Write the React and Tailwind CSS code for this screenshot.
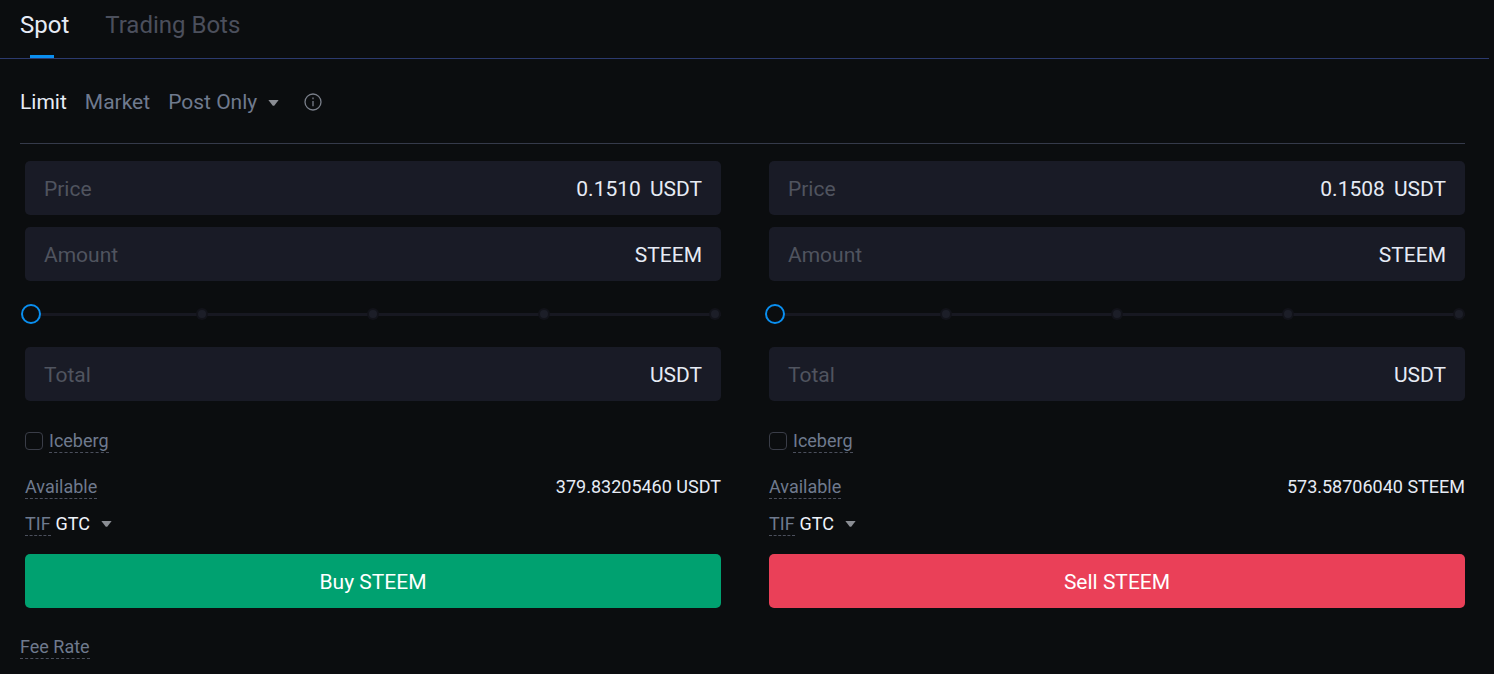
import React from "react";

function Caret({ className }) {
  return (
    <svg viewBox="0 0 12 8" className={className}>
      <path d="M0.4 0.6 H11.6 L7 6.6 Q6 7.6 5 6.6 Z" fill="#8a8d93" />
    </svg>
  );
}

function Field({ label, value, unit }) {
  return (
    <div className="flex h-[54px] items-center justify-between rounded-[5px] bg-[#191b26] px-[19px] pt-[3px] text-[21px]">
      <span className="text-[#50545f]">{label}</span>
      <span className="flex gap-[9px] text-[#e6ebf5]">
        {value && <span>{value}</span>}
        <span>{unit}</span>
      </span>
    </div>
  );
}

function Slider() {
  return (
    <div className="relative my-[22px] flex h-[22px] items-center">
      <div className="h-[3px] w-full bg-[#171821]" />
      <div className="absolute inset-x-0 flex items-center justify-between pl-[173px] pr-[2px]">
        {[0, 1, 2, 3].map((i) => (
          <span key={i} className="h-2 w-2 rounded-full bg-[#1c1e28] ring-2 ring-[#12131a]" />
        ))}
      </div>
      <span className="absolute left-[-4px] h-5 w-5 rounded-full border-2 border-[#0a8ff0] bg-[#0b0d0f]" />
    </div>
  );
}

function Side({ price, avail, action, btn }) {
  return (
    <div className="flex w-[696px] flex-col">
      <div className="flex flex-col gap-3">
        <Field label="Price" value={price} unit="USDT" />
        <Field label="Amount" unit="STEEM" />
      </div>
      <Slider />
      <Field label="Total" unit="USDT" />
      <div className="mt-[29px] flex h-[22px] items-center gap-[6px] text-[18px] leading-[22px]">
        <span className="h-[18px] w-[18px] rounded-[4px] border border-[#3a3d48]" />
        <span className="border-b border-dashed border-[#4b4f5c] text-[#6f7a8e]">Iceberg</span>
      </div>
      <div className="mt-[24px] flex h-[22px] items-center justify-between text-[18px] leading-[22px]">
        <span className="border-b border-dashed border-[#4b4f5c] text-[#6f7a8e]">Available</span>
        <span className="text-[#e6ebf5]">{avail}</span>
      </div>
      <div className="mt-[15px] flex h-[22px] items-center text-[18px] leading-[22px]">
        <span className="border-b border-dashed border-[#4b4f5c] text-[#6f7a8e]">TIF</span>
        <span className="ml-[5px] text-[#f0f3fa]">GTC</span>
        <Caret className="ml-[11px] h-[8px] w-[11px]" />
      </div>
      <button className={`mt-[19px] h-[54px] rounded-[5px] pt-[3px] text-[21px] text-white ${btn}`}>{action}</button>
    </div>
  );
}

export default function App() {
  return (
    <div className="h-[674px] w-[1494px] overflow-hidden bg-[#0b0d0f] font-['Roboto',sans-serif]">
      <div className="mr-[5px] flex h-[59px] gap-9 border-b border-[#2c3a6e] pl-5 text-[24px] leading-[26px]">
        <div className="relative pt-3 text-[#e6ebf5]">
          Spot
          <span className="absolute bottom-0 left-[10px] h-[3px] w-6 bg-[#0a8ff0]" />
        </div>
        <div className="pt-3 text-[#4b4f5c]">Trading Bots</div>
      </div>
      <div className="mx-5 mr-[29px] flex h-[85px] items-center border-b border-[#353a4a] pt-[4px] text-[21px]">
        <span className="text-[#e6ebf5]">Limit</span>
        <span className="ml-[18px] text-[#6f7a8e]">Market</span>
        <span className="ml-[18px] text-[#6f7a8e]">Post Only</span>
        <Caret className="ml-[11px] h-[8px] w-[11px]" />
        <svg viewBox="0 0 18 18" className="ml-[25px] h-[18px] w-[18px] -translate-y-px" fill="none" stroke="#7a7f8a" strokeWidth="1.3">
          <circle cx="9" cy="9" r="8" />
          <path d="M9 8v5.2" />
          <path d="M9 4.6v1.6" />
        </svg>
      </div>
      <div className="ml-[25px] mt-[17px] flex gap-12">
        <Side price="0.1510" avail="379.83205460 USDT" action="Buy STEEM" btn="bg-[#00a170]" />
        <Side price="0.1508" avail="573.58706040 STEEM" action="Sell STEEM" btn="bg-[#ea4058]" />
      </div>
      <div className="ml-5 mt-[28px] w-fit border-b border-dashed border-[#4b4f5c] text-[18px] leading-[22px] text-[#6f7a8e]">
        Fee Rate
      </div>
    </div>
  );
}
